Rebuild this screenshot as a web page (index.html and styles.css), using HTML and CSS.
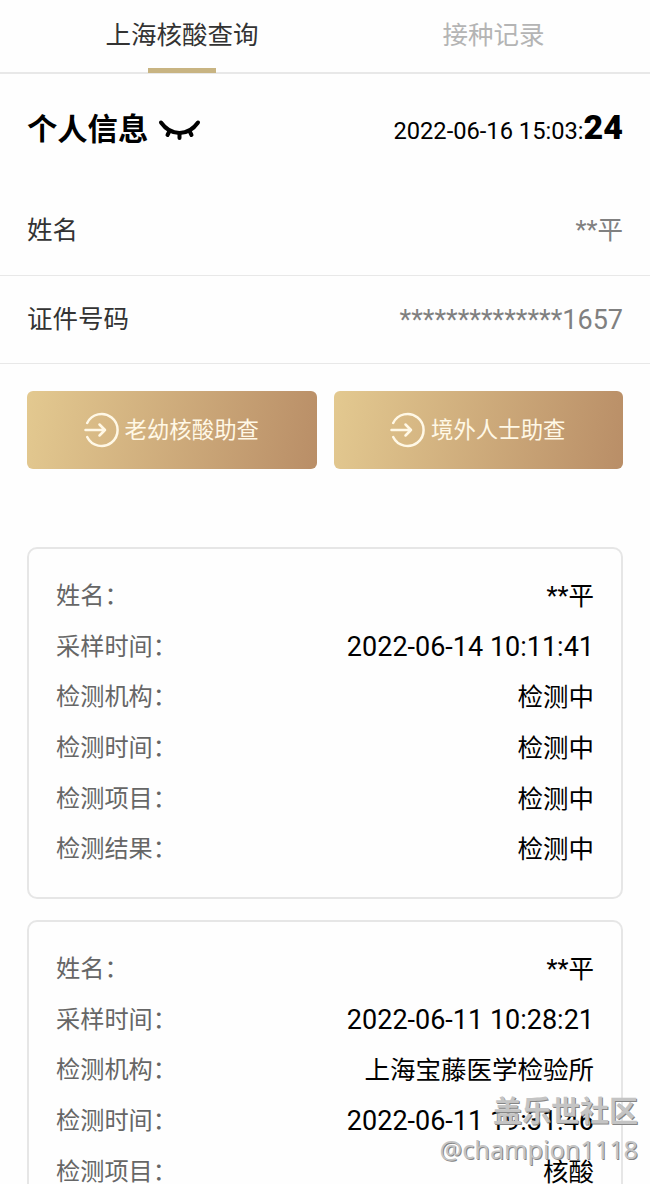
FILE: index.html
```html
<!DOCTYPE html>
<html lang="zh-CN">
<head>
    <meta charset="utf-8">
    <title>上海核酸查询</title>
    <link rel="stylesheet" href="styles.css">
</head>
<body>
    <div class="page">
        <div class="tabs">
            <div class="tab tab-active">上海核酸查询</div>
            <div class="tab">接种记录</div>
        </div>
        <div class="info-header">
            <div class="info-title">
                <span>个人信息</span>
                <svg class="eye" width="44" height="24" viewBox="0 0 44 24" fill="none" stroke="#000" stroke-width="4" stroke-linecap="round">
                    <path d="M4 3.500C9 10.500 15 14 22.500 14S36 10.500 41 3.500"/>
                    <path d="M12 13l-1.500 3M22.500 14v5M33 13l1.500 3"/>
                </svg>
            </div>
            <div class="clock">2022-06-16 15:03:<span class="seconds">24</span></div>
        </div>
        <div class="info-row">
            <span>姓名</span>
            <span class="info-value">**平</span>
        </div>
        <div class="info-row">
            <span>证件号码</span>
            <span class="info-value id-number">**************1657</span>
        </div>
        <div class="buttons">
            <div class="button">
                <svg class="enter" width="36" height="36" viewBox="0 0 36 36" fill="none" stroke="#fff8e6" stroke-width="2.500" stroke-linecap="round" stroke-linejoin="round">
                    <path d="M3.200 11A16 16 0 1 1 3.200 25"/>
                    <path d="M1.500 18H21M15.500 12.500l5.500 5.500-5.500 5.500"/>
                </svg>
                <span>老幼核酸助查</span>
            </div>
            <div class="button">
                <svg class="enter" width="36" height="36" viewBox="0 0 36 36" fill="none" stroke="#fff8e6" stroke-width="2.500" stroke-linecap="round" stroke-linejoin="round">
                    <path d="M3.200 11A16 16 0 1 1 3.200 25"/>
                    <path d="M1.500 18H21M15.500 12.500l5.500 5.500-5.500 5.500"/>
                </svg>
                <span>境外人士助查</span>
            </div>
        </div>
        <div class="records">
            <div class="card">
                <div class="card-row"><span class="label">姓名：</span><span>**平</span></div>
                <div class="card-row"><span class="label">采样时间：</span><span class="date">2022-06-14 10:11:41</span></div>
                <div class="card-row"><span class="label">检测机构：</span><span>检测中</span></div>
                <div class="card-row"><span class="label">检测时间：</span><span>检测中</span></div>
                <div class="card-row"><span class="label">检测项目：</span><span>检测中</span></div>
                <div class="card-row"><span class="label">检测结果：</span><span>检测中</span></div>
            </div>
            <div class="card">
                <div class="card-row"><span class="label">姓名：</span><span>**平</span></div>
                <div class="card-row"><span class="label">采样时间：</span><span class="date">2022-06-11 10:28:21</span></div>
                <div class="card-row"><span class="label">检测机构：</span><span>上海宝藤医学检验所</span></div>
                <div class="card-row"><span class="label">检测时间：</span><span class="date">2022-06-11 19:31:46</span></div>
                <div class="card-row"><span class="label">检测项目：</span><span>核酸</span></div>
            </div>
        </div>
        <div class="watermark">
            <div class="watermark-site">盖乐世社区</div>
            <div class="watermark-user">@champion1118</div>
        </div>
    </div>
</body>
</html>
```
FILE: styles.css
```css
* {
    box-sizing: border-box;
}

body {
    margin: 0;
    background: #fefefe;
    color: #000;
    font-family: Roboto, "Noto Sans CJK SC", sans-serif;
}

.page {
    position: relative;
    height: 1184px;
    overflow: hidden;
}

.tabs {
    display: flex;
    height: 74px;
    padding-left: 39px;
    border-bottom: 2px solid #e8e8e8;
}

.tab {
    flex: 1;
    display: flex;
    flex-direction: column;
    align-items: center;
    height: 73px;
    padding-left: 12px;
    line-height: 70px;
    font-size: 25.5px;
    color: #b4b4b4;
}

.tab-active {
    flex: 0 0 286px;
    padding-left: 0;
    color: #333;
}

.tab-active::after {
    content: "";
    width: 68px;
    height: 5px;
    margin-top: -2px;
    background: #c8b482;
}

.info-header {
    display: flex;
    justify-content: space-between;
    height: 113px;
    padding: 0 27px;
    line-height: 106px;
}

.info-title {
    display: flex;
    font-size: 30.3px;
    font-weight: 700;
    line-height: 111px;
}

.eye {
    margin: 45px 0 0 9px;
}

.clock {
    font-size: 23.7px;
}

.seconds {
    font-size: 34px;
    font-weight: 900;
}

.info-row {
    display: flex;
    justify-content: space-between;
    height: 88.5px;
    padding: 0 27px;
    border-bottom: 1px solid #e8e8e8;
    line-height: 87px;
    font-size: 25.5px;
    color: #333;
}

.info-value {
    color: #808080;
}

.id-number {
    line-height: 88px;
    font-size: 27px;
}

.buttons {
    display: flex;
    gap: 17px;
    padding: 27px 27px 78px;
}

.button {
    flex: 1;
    display: flex;
    justify-content: center;
    gap: 5px;
    height: 78px;
    padding-right: 1px;
    border-radius: 6px;
    background: linear-gradient(100deg, #e3c990, #b98e67);
    color: #fff8e6;
    line-height: 78px;
    font-size: 22.4px;
}

.enter {
    margin-top: 21px;
}

.records {
    display: flex;
    flex-direction: column;
    gap: 21px;
    padding: 0 27px;
}

.card {
    height: 352px;
    padding: 22px 27px;
    border: 2px solid #e6e6e6;
    border-radius: 10px;
}

.card-row {
    display: flex;
    justify-content: space-between;
    height: 50.7px;
    line-height: 50.7px;
    font-size: 25.5px;
}

.label {
    font-size: 24.2px;
    color: #666;
}

.date {
    font-size: 27px;
}

.watermark {
    position: absolute;
    right: 12px;
    bottom: 17px;
    text-align: right;
    color: #c4c4c4;
    text-shadow: 1px 1px 0 #858585;
}

.watermark-site {
    font-size: 29px;
    font-weight: 700;
    line-height: 38px;
}

.watermark-user {
    font-family: "Noto Sans", sans-serif;
    font-size: 25.2px;
    line-height: 36px;
}
```
